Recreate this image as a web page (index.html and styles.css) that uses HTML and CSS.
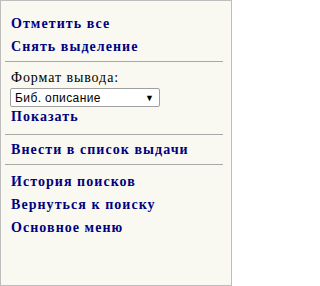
FILE: index.html
```html
<!DOCTYPE html>
<html lang="ru">
<head>
<meta charset="utf-8">
<link rel="stylesheet" href="styles.css">
</head>
<body>
<div class="panel">
  <div class="group first">
    <a class="act" href="#">Отметить все</a>
    <a class="act" href="#">Снять выделение</a>
  </div>
  <hr class="sep">
  <div class="group format">
    <div class="label">Формат вывода:</div>
    <div class="select"><span>Биб. описание</span><span class="arrow">▼</span></div>
    <a class="act tight" href="#">Показать</a>
  </div>
  <hr class="sep s2">
  <div class="group g3">
    <a class="act" href="#">Внести в список выдачи</a>
  </div>
  <hr class="sep s3">
  <div class="group g4">
    <a class="act" href="#">История поисков</a>
    <a class="act" href="#">Вернуться к поиску</a>
    <a class="act" href="#">Основное меню</a>
  </div>
</div>
</body>
</html>
```
FILE: styles.css
```css
html, body {
  margin: 0;
  padding: 0;
}
body {
  font-family: "Liberation Serif", "Times New Roman", serif;
}
.panel {
  box-sizing: border-box;
  width: 232px;
  height: 286px;
  border: 1px solid #bdbdbd;
  background: #f9f9f1;
  padding: 11px 8px 0 4px;
}
.group {
  padding-left: 6px;
}
.act {
  display: block;
  color: #000080;
  font-weight: bold;
  font-size: 14px;
  letter-spacing: 1.05px;
  line-height: 23px;
  text-decoration: none;
  white-space: nowrap;
}
.sep {
  border: 0;
  border-top: 1px solid #a8a8a8;
  margin: 3px 0 0 0;
  height: 0;
}
.format {
  padding-top: 8px;
}
.label {
  font-size: 14px;
  letter-spacing: 0.9px;
  line-height: 15px;
  color: #000;
}
.select {
  box-sizing: border-box;
  width: 150px;
  height: 19px;
  margin-top: 3px;
  margin-left: -1px;
  border: 1px solid #a0a0a0;
  border-radius: 2px;
  background: #fff;
  display: flex;
  align-items: center;
  justify-content: space-between;
  padding: 0 5px 0 4px;
  font-family: "Liberation Sans", Arial, sans-serif;
  font-size: 12px;
  letter-spacing: 0.4px;
  color: #000;
}
.arrow {
  font-size: 9px;
  letter-spacing: 0;
}
.act.tight {
  line-height: 16px;
  margin-top: 2px;
}
.s2 {
  margin-top: 9px;
}
.g3 {
  padding-top: 3px;
}
.s3 {
  margin-top: 3px;
}
.g4 {
  padding-top: 5px;
}
```
